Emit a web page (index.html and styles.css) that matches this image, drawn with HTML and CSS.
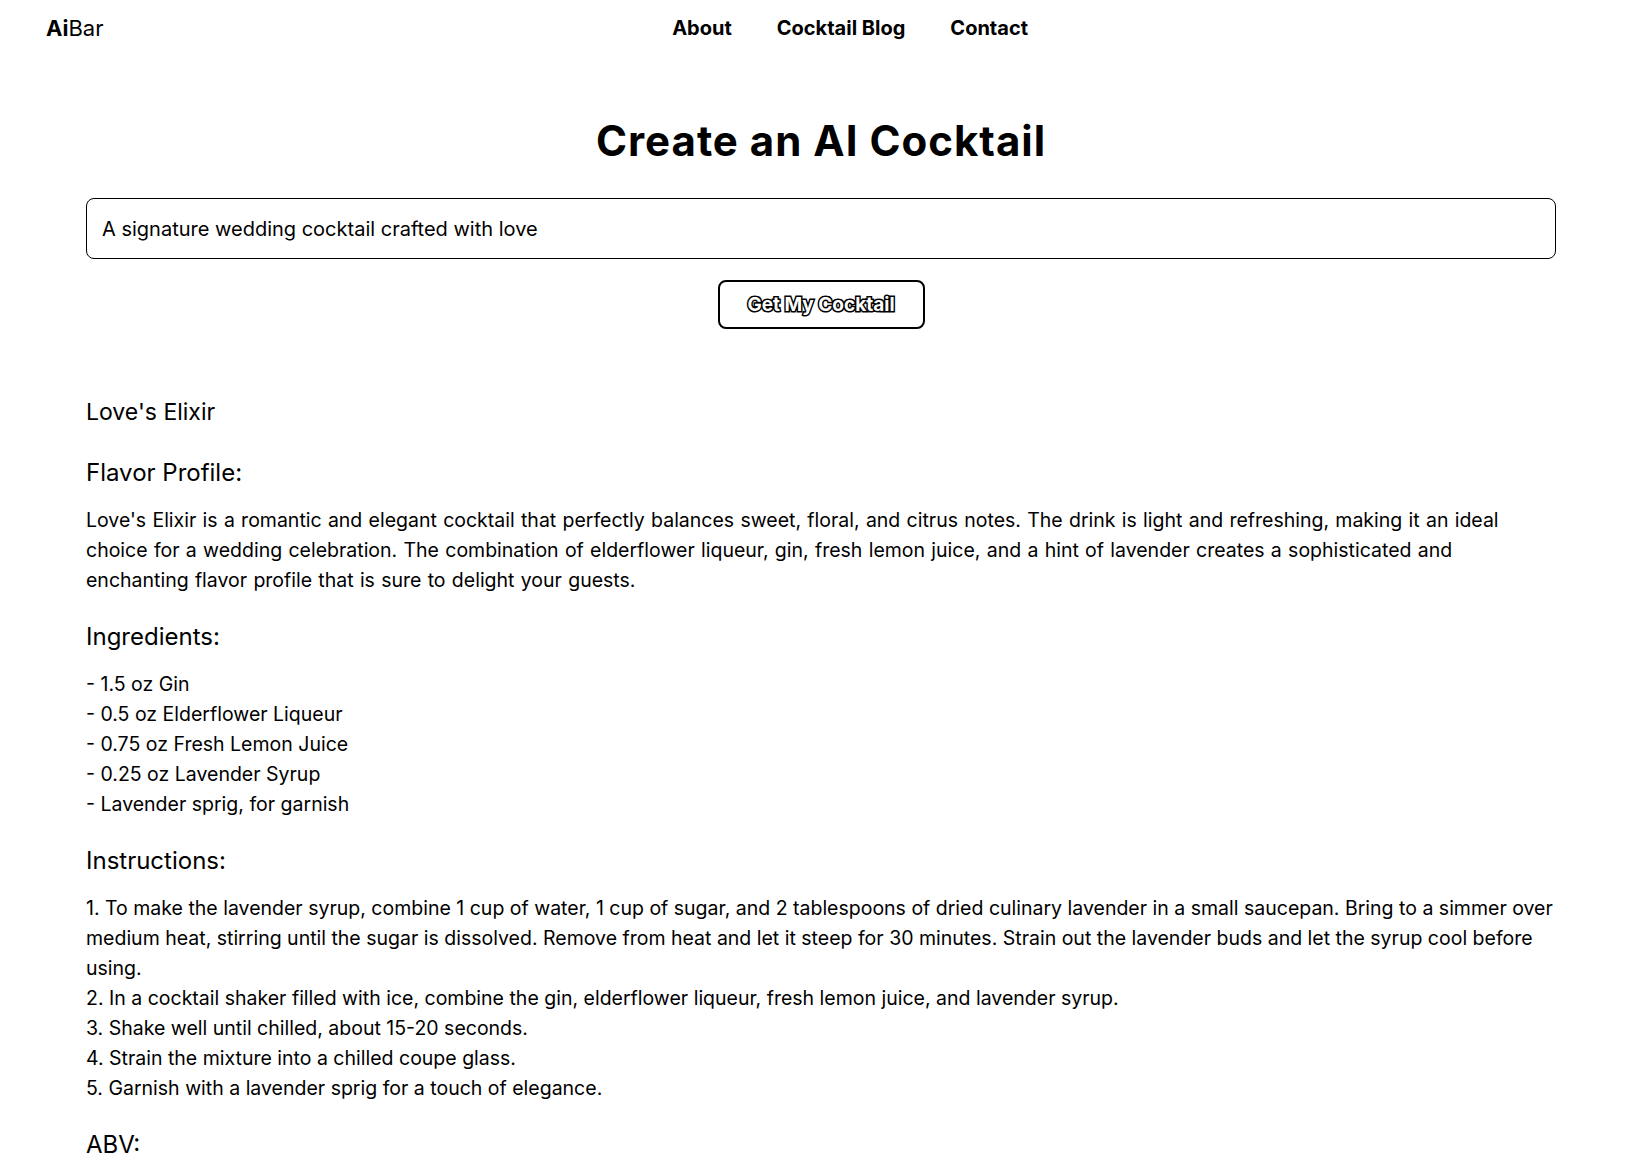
FILE: index.html
```html
<!DOCTYPE html>
<html lang="en">
<head>
<meta charset="utf-8">
<title>AiBar – Create an AI Cocktail</title>
<link rel="stylesheet" href="styles.css">
</head>
<body>
<header class="site-header">
  <a class="logo" href="#"><b>Ai</b>Bar</a>
  <nav class="nav">
    <a href="#">About</a>
    <a href="#">Cocktail Blog</a>
    <a href="#">Contact</a>
  </nav>
</header>
<main class="main">
  <h1 class="title">Create an AI Cocktail</h1>
  <form class="prompt-form">
    <input class="prompt-input" type="text" value="A signature wedding cocktail crafted with love">
    <button class="prompt-button" type="button">Get My Cocktail</button>
  </form>
  <section class="recipe">
    <h2 class="recipe-name">Love's Elixir</h2>
    <h3 class="recipe-heading">Flavor Profile:</h3>
    <p class="recipe-text recipe-flavor">Love's Elixir is a romantic and elegant cocktail that perfectly balances sweet, floral, and citrus notes. The drink is light and refreshing, making it an ideal choice for a wedding celebration. The combination of elderflower liqueur, gin, fresh lemon juice, and a hint of lavender creates a sophisticated and enchanting flavor profile that is sure to delight your guests.</p>
    <h3 class="recipe-heading">Ingredients:</h3>
    <p class="recipe-text">- 1.5 oz Gin<br>- 0.5 oz Elderflower Liqueur<br>- 0.75 oz Fresh Lemon Juice<br>- 0.25 oz Lavender Syrup<br>- Lavender sprig, for garnish</p>
    <h3 class="recipe-heading">Instructions:</h3>
    <p class="recipe-text">1. To make the lavender syrup, combine 1 cup of water, 1 cup of sugar, and 2 tablespoons of dried culinary lavender in a small saucepan. Bring to a simmer over medium heat, stirring until the sugar is dissolved. Remove from heat and let it steep for 30 minutes. Strain out the lavender buds and let the syrup cool before using.<br>2. In a cocktail shaker filled with ice, combine the gin, elderflower liqueur, fresh lemon juice, and lavender syrup.<br>3. Shake well until chilled, about 15-20 seconds.<br>4. Strain the mixture into a chilled coupe glass.<br>5. Garnish with a lavender sprig for a touch of elegance.</p>
    <h3 class="recipe-heading">ABV:</h3>
  </section>
</main>
</body>
</html>
```
FILE: styles.css
```css
* { box-sizing: border-box; }

html, body {
  margin: 0;
  padding: 0;
  background: #fff;
  color: #000;
}

body {
  font-family: Inter, "Noto Sans", sans-serif;
  font-size: 19.5px;
}

a { color: #000; text-decoration: none; }

.site-header {
  display: flex;
  align-items: center;
  height: 56px;
  padding: 0 46px;
}

.logo {
  font-size: 22px;
  font-weight: 400;
}

.logo b { font-weight: 700; }

.nav {
  display: flex;
  gap: 45px;
  margin-left: auto;
  margin-right: 553px;
}

.nav a {
  font-size: 20px;
  font-weight: 700;
}

.main {
  padding: 0 71px 40px 86px;
}

.title {
  margin: 62px 0 0;
  font-size: 42px;
  line-height: 46px;
  letter-spacing: 1px;
  font-weight: 700;
  text-align: center;
}

.prompt-form {
  display: flex;
  flex-direction: column;
  align-items: center;
  gap: 21px;
  margin-top: 34px;
}

.prompt-input {
  width: 100%;
  height: 61px;
  padding: 0 15px;
  border: 1px solid #000;
  border-radius: 8px;
  font-family: inherit;
  font-size: 20px;
  color: #000;
  background: #fff;
  outline: none;
}

.prompt-button {
  width: 207px;
  height: 49px;
  padding: 0;
  border: 2px solid #000;
  border-radius: 8px;
  background: #fff;
  font-family: inherit;
  font-size: 19px;
  font-weight: 700;
  color: #fff;
  -webkit-text-stroke: 3px #000;
  paint-order: stroke fill;
  cursor: pointer;
}

.recipe {
  margin-top: 68px;
}

.recipe-name,
.recipe-heading {
  margin: 27px 0 17px;
  font-size: 24px;
  line-height: 30px;
  font-weight: 400;
}

.recipe-name {
  margin: 0 0 31px;
  font-size: 23px;
}

.recipe-text {
  margin: 0;
  font-size: 19.5px;
  line-height: 30px;
}

.recipe-flavor {
  word-spacing: 0.8px;
}
```
